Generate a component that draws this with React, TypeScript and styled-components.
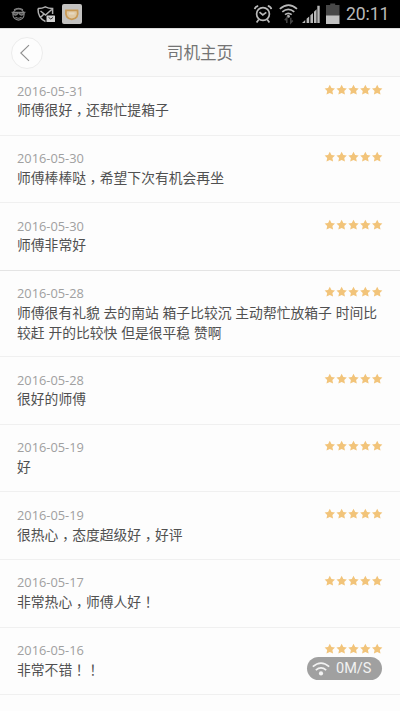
import React from 'react';
import styled, { createGlobalStyle } from 'styled-components';

const GlobalStyle = createGlobalStyle`
  * { box-sizing: border-box; }
  body { margin: 0; background: #fdfdfd; }
`;

const Screen = styled.div`
  display: flex;
  flex-direction: column;
  width: 400px;
  height: 711px;
  overflow: hidden;
  background: #fdfdfd;
  font-family: "Open Sans", "Noto Sans CJK SC", sans-serif;
`;

const StatusBar = styled.div`
  flex: none;
  height: 28px;
  display: flex;
  justify-content: space-between;
  background: #000;
`;

const StatusIcons = styled.svg`
  display: block;
  height: 28px;
`;

const StatusRight = styled.div`
  display: flex;
  width: 160px;
`;

const Clock = styled.span`
  font: 17.6px/28px Roboto, sans-serif;
  color: #b9b9b9;
  letter-spacing: -0.1px;
  margin-left: 1px;
`;

const Header = styled.header`
  flex: none;
  height: 49px;
  display: grid;
  grid-template-columns: 54px 1fr 54px;
  align-items: center;
  background: #fafafa;
  border-top: 1px solid #dcdcdc;
  border-bottom: 1px solid #eeeeee;
`;

const BackButton = styled.button`
  width: 32px;
  height: 32px;
  margin-left: 11px;
  padding: 0 4px 0 0;
  border: 1px solid #ececec;
  border-radius: 50%;
  background: #fdfdfd;
  display: flex;
  align-items: center;
  justify-content: center;
`;

const Title = styled.h1`
  margin: 0;
  font-size: 16.6px;
  font-weight: 400;
  line-height: 24px;
  text-align: center;
  color: #747474;
`;

const ReviewViewport = styled.main`
  flex: 1;
  min-height: 0;
  overflow: hidden;
`;

const ReviewList = styled.ul`
  margin: -8.7px 0 0;
  padding: 0;
  list-style: none;
`;

const ReviewRow = styled.li<{ $tall?: boolean; $strong?: boolean }>`
  height: ${p => (p.$tall ? 86.4 : 67.55)}px;
  padding: 13.4px 17px 0;
  border-bottom: 1px solid ${p => (p.$strong ? '#e4e4e4' : '#f0f0f0')};
`;

const ReviewTop = styled.div`
  display: flex;
  justify-content: space-between;
  height: 18.7px;
`;

const DateText = styled.time`
  font-size: 12.8px;
  line-height: 19px;
  color: #a0a0a0;
`;

const Stars = styled.svg`
  display: block;
  margin: 2px 0 0;
  width: 59px;
  height: 12px;
  fill: #f2c47a;
`;

const Comment = styled.p`
  margin: 0;
  font-size: 13.8px;
  line-height: 20.3px;
  word-spacing: 0.2px;
  color: #505050;
  white-space: pre;
`;

/* Full-width punctuation set in the middle of its cell; $drop lowers it toward the baseline. */
const Mark = styled.span<{ $drop: number }>`
  font-family: "Noto Sans CJK TC", sans-serif;
  line-height: 0;
  vertical-align: ${p => -p.$drop}px;
`;

const SpeedBadge = styled.div`
  position: absolute;
  left: 307px;
  top: 657px;
  width: 75px;
  height: 23px;
  border-radius: 12px;
  display: flex;
  align-items: center;
  padding-left: 5px;
  gap: 6px;
  background: #a0a0a0;
  color: #f2f2f2;
  font: 14.5px/23px Roboto, sans-serif;
`;

type Review = { date: string; lines: string[]; strong?: boolean };

const reviews: Review[] = [
  { date: '2016-05-31', lines: ['师傅很好，还帮忙提箱子'] },
  { date: '2016-05-30', lines: ['师傅棒棒哒，希望下次有机会再坐'] },
  { date: '2016-05-30', lines: ['师傅非常好'], strong: true },
  { date: '2016-05-28', lines: ['师傅很有礼貌 去的南站 箱子比较沉 主动帮忙放箱子 时间比', '较赶 开的比较快 但是很平稳 赞啊'] },
  { date: '2016-05-28', lines: ['很好的师傅'] },
  { date: '2016-05-19', lines: ['好'] },
  { date: '2016-05-19', lines: ['很热心，态度超级好，好评'] },
  { date: '2016-05-17', lines: ['非常热心，师傅人好！'] },
  { date: '2016-05-16', lines: ['非常不错！！'] },
];

const FiveStars = () => (
  <Stars viewBox="0 0 59 12">
    {[0, 1, 2, 3, 4].map(i => (
      <path
        key={i}
        transform={`translate(${i * 11.85 + 5.8} 6)`}
        d="M0-5.2 1.7-2 5.2-1.6 2.6.9 3.3 4.6 0 2.9-3.3 4.6-2.6.9-5.2-1.6-1.7-2Z"
      />
    ))}
  </Stars>
);

const LeftStatusIcons = () => (
  <StatusIcons width="90" viewBox="0 0 90 28">
    <g fill="none" stroke="#858585" strokeWidth="1.1">
      <circle cx="18.5" cy="14.5" r="5.6" />
      <path d="M11.5 12.3h14M14 9.8q4.5-3 9 0M15.5 17.3q3 2 6 0" />
      <path d="M13 12.5h4.8v1.2q-2.4 3-4.8 0ZM19.2 12.5H24v1.2q-2.4 3-4.8 0Z" fill="#555" />
    </g>
    <path d="M38 8.5Q42 8.6 45.3 6.8 49 8.6 52.6 8.5V14M38 8.5Q37.8 18 45.5 21.5M40.5 11l5 4 6.2-5.5M40.5 17.5l3.2-3.2" fill="none" stroke="#b0b0b0" strokeWidth="1.5" />
    <rect x="46.5" y="15.5" width="8.5" height="6.5" rx="0.6" fill="#d0d0d0" />
    <path d="M48.5 17.3l2.3 1.8 2.3-1.8" fill="none" stroke="#333" />
    <rect x="62" y="4" width="20" height="20" rx="2" fill="#c3c2c0" />
    <path d="M66 10.3h11.5Q79 18.8 71.8 19.3 64.8 18.8 66 10.3Z" fill="#dfc9a4" stroke="#c99a55" strokeWidth="1.8" />
    <path d="M69 13.5h5.5" stroke="#e6d8c0" strokeWidth="2" />
  </StatusIcons>
);

const RightStatusIcons = () => (
  <StatusIcons width="105" viewBox="240 0 105 28">
    <g fill="none" stroke="#b9b9b9" strokeWidth="1.7">
      <circle cx="263" cy="14" r="6.4" />
      <path d="M259.5 12.2l3.3 2.8 3.5-2.7M258.8 19.5l-2.2 3M267.2 19.5l2.2 3M254.7 9.2q.3-2.8 3.5-3.4M271.3 9.2q-.3-2.8-3.5-3.4" />
      <path d="M279.8 8.8q8.8-7.5 17.2 0M282.3 11.9q6-5.2 12 0M285 14.7q3.3-2.7 6.7 0" />
    </g>
    <circle cx="288.4" cy="16.2" r="1.5" fill="#aaa" />
    <path d="M286.8 23v-5l-2 2.3M290.8 17.8v5l2-2.3" fill="none" stroke="#444" strokeWidth="1.5" />
    <path d="M302 23l3.2-2.9V23ZM306.6 18.8l2.6-2.4V23h-2.6ZM310.4 15.3l2.6-2.4V23h-2.6ZM314 11.8l2.6-2.6V23H314ZM317.3 5.8h2.4V23h-2.4Z" fill="#b9b9b9" />
    <path d="M326 5h4.2V3.5h5V5h4.3v11H326Z" fill="#484848" />
    <path d="M326 15.5h13.5V24H326Z" fill="#c2c2c2" />
  </StatusIcons>
);

const renderComment = (line: string) =>
  line.split(/([，！])/).filter(Boolean).map((part, i) =>
    /[，！]/.test(part) ? <Mark key={i} $drop={part === '，' ? 4 : 0}>{part}</Mark> : part
  );

export default function App() {
  return (
    <Screen>
      <GlobalStyle />
      <StatusBar>
        <LeftStatusIcons />
        <StatusRight>
          <RightStatusIcons />
          <Clock>20:11</Clock>
        </StatusRight>
      </StatusBar>
      <Header>
        <BackButton aria-label="返回">
          <svg width="12" height="18" viewBox="0 0 12 18" fill="none" stroke="#8e8e8e" strokeWidth="1.1">
            <path d="M10 1.2 1.8 9l8.2 7.8" />
          </svg>
        </BackButton>
        <Title>司机主页</Title>
      </Header>
      <ReviewViewport>
        <ReviewList>
          {reviews.map((r, i) => (
            <ReviewRow key={i} $tall={r.lines.length > 1} $strong={r.strong}>
              <ReviewTop>
                <DateText>{r.date}</DateText>
                <FiveStars />
              </ReviewTop>
              {r.lines.map(line => (
                <Comment key={line}>{renderComment(line)}</Comment>
              ))}
            </ReviewRow>
          ))}
        </ReviewList>
      </ReviewViewport>
      <SpeedBadge>
        <svg width="18" height="16" viewBox="0 0 18 16" fill="none" stroke="#f2f2f2" strokeWidth="1.7">
          <path d="M.8 5.7q8.2-7.2 16.4 0M3.8 9.1q5.2-4.4 10.4 0" />
          <circle cx="9" cy="12.4" r="2.1" fill="#f2f2f2" stroke="none" />
        </svg>
        0M/S
      </SpeedBadge>
    </Screen>
  );
}
